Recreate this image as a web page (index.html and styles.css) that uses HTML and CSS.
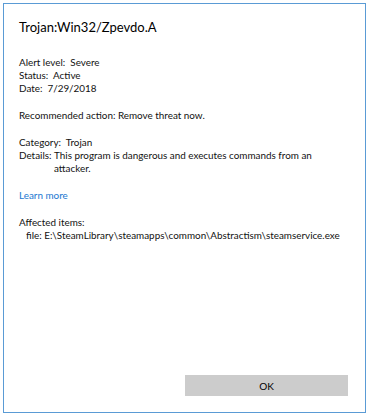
FILE: index.html
```html
<!DOCTYPE html>
<html lang="en">
<head>
  <meta charset="UTF-8">
  <title>Trojan:Win32/Zpevdo.A</title>
  <link rel="stylesheet" href="styles.css">
</head>
<body>
  <div class="dialog">
    <h1 class="title">Trojan:Win32/Zpevdo.A</h1>
    <div class="group">
      <p>Alert level:&nbsp; Severe</p>
      <p>Status:&nbsp; Active</p>
      <p>Date:&nbsp; 7/29/2018</p>
    </div>
    <div class="group">
      <p>Recommended action: Remove threat now.</p>
    </div>
    <div class="group">
      <p>Category:&nbsp; Trojan</p>
      <div class="details">
        <span>Details:</span>
        <span>This program is dangerous and executes commands from an attacker.</span>
      </div>
    </div>
    <div class="group">
      <a href="#" class="link">Learn more</a>
    </div>
    <div class="group">
      <p>Affected items:</p>
      <p class="item">file: E:\SteamLibrary\steamapps\common\Abstractism\steamservice.exe</p>
    </div>
    <div class="actions">
      <button class="btn">OK</button>
    </div>
  </div>
</body>
</html>
```

FILE: styles.css
```css
*{margin:0;padding:0;box-sizing:border-box}
html,body{height:100%}
body{background:#fff;font-family:'Lato',sans-serif;font-size:9.9px;color:#111;padding:3px 2px 2px 3px}
.dialog{height:100%;border:1px solid #5a9bd5;padding:13px 17px 16px 15px;display:flex;flex-direction:column}
.title{font-size:13px;font-weight:400;line-height:20px;color:#000;margin-bottom:19px}
.group{line-height:13px;margin-bottom:14px}
.details{display:grid;grid-template-columns:35px 1fr;padding-right:8px}
.link{color:#1a78d0;text-decoration:none}
.item{padding-left:7px;white-space:nowrap}
.actions{margin-top:auto;display:flex;justify-content:flex-end}
.btn{width:163px;height:21px;border:none;background:#cccccc;font-family:inherit;font-size:10px;color:#000}
```
